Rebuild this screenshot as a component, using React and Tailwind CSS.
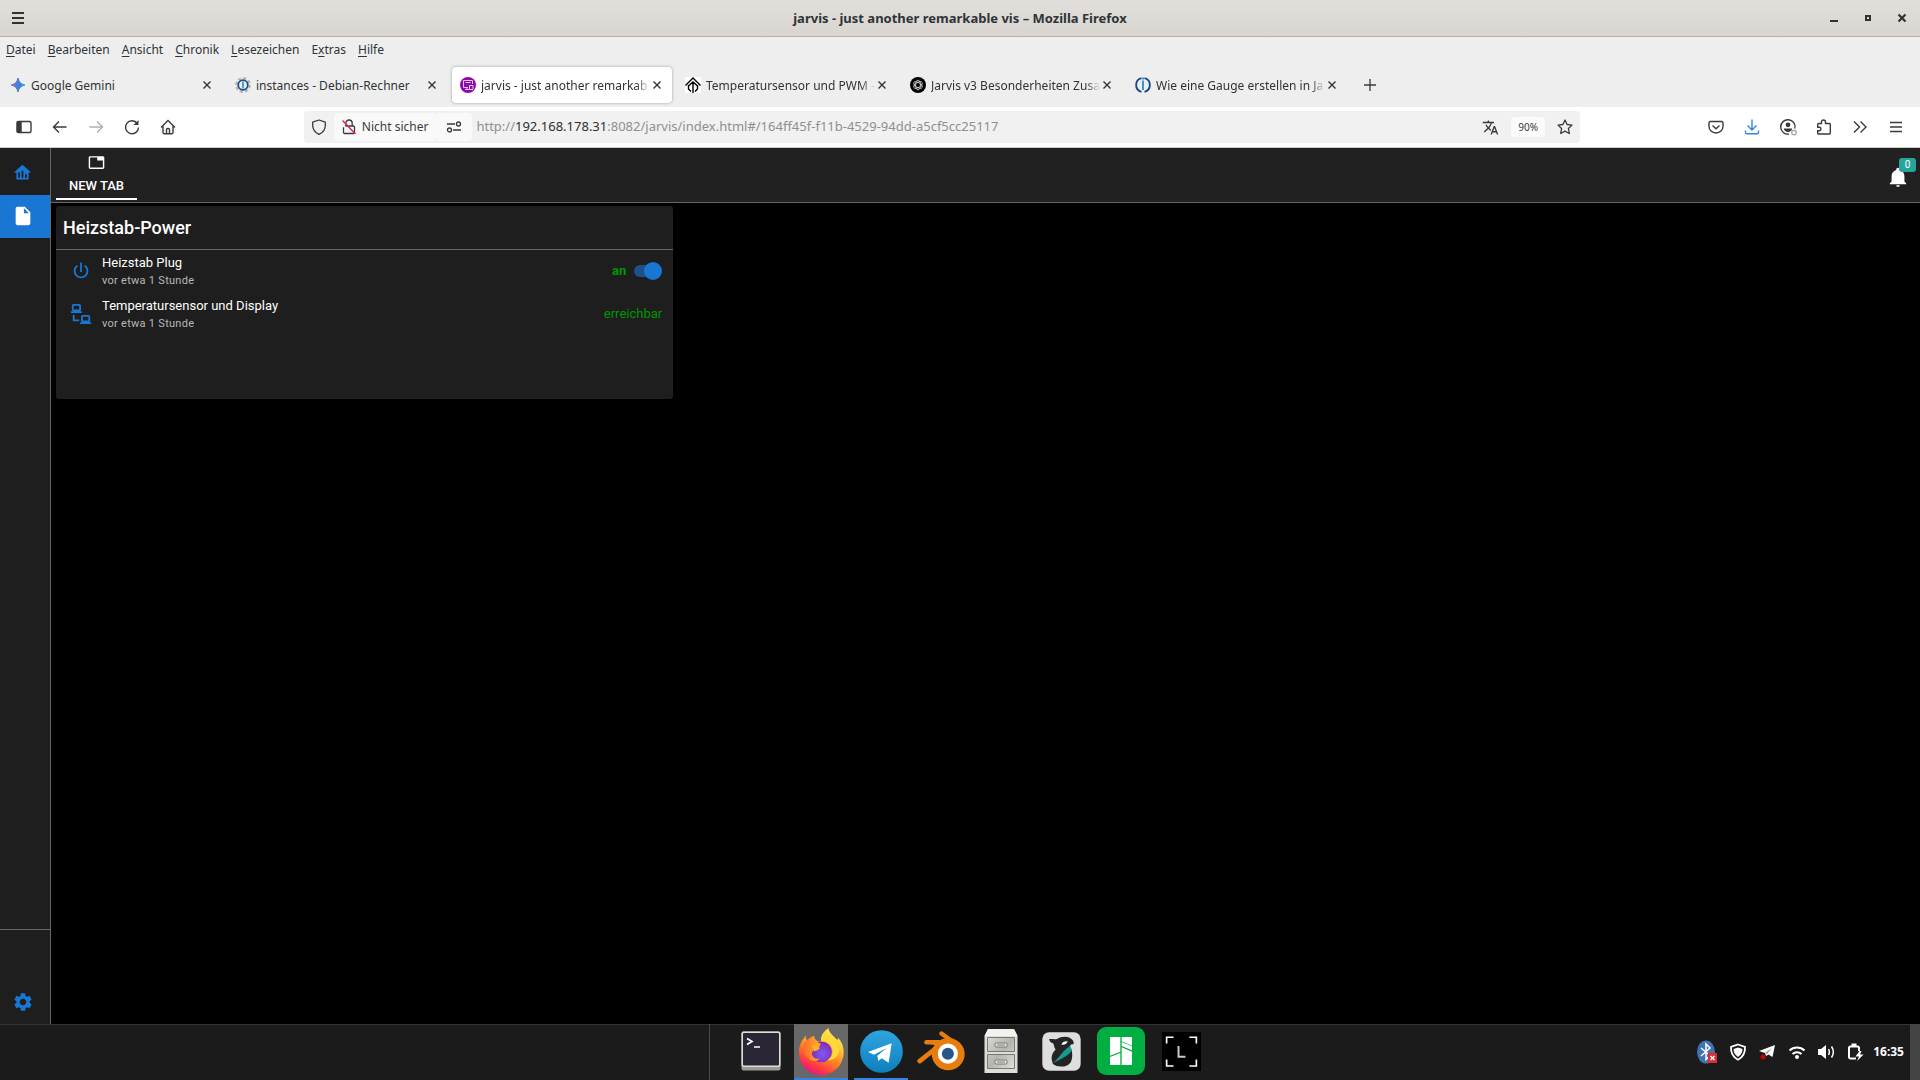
import { MdTab, MdTranslate, MdSettings } from 'react-icons/md'

const MENU = [
  ['', 'D', 'atei'],
  ['', 'B', 'earbeiten'],
  ['', 'A', 'nsicht'],
  ['', 'C', 'hronik'],
  ['', 'L', 'esezeichen'],
  ['E', 'x', 'tras'],
  ['', 'H', 'ilfe'],
]

const TABS = [
  { title: 'Google Gemini', icon: GeminiIcon },
  { title: 'instances - Debian-Rechner', icon: AdminIcon },
  { title: 'jarvis - just another remarkab', icon: JarvisIcon, active: true, fade: true },
  { title: 'Temperatursensor und PWM -', icon: ArrowIcon, fade: true },
  { title: 'Jarvis v3 Besonderheiten Zusa', icon: KnotIcon, fade: true },
  { title: 'Wie eine Gauge erstellen in Ja', icon: BrokerIcon, fade: true },
]

const PATHS = {
  home: 'M12 3L2 12H5V20H19V12H22L12 3M9 18H7V12H9V18M13 18H11V10H13V18M17 18H15V14H17V18Z',
  file: 'M13,9V3.5L18.5,9M6,2C4.89,2 4,2.89 4,4V20A2,2 0 0,0 6,22H18A2,2 0 0,0 20,20V8L14,2H6Z',
  bell: 'M21,19V20H3V19L5,17V11C5,7.9 7.03,5.17 10,4.29C10,4.19 10,4.1 10,4A2,2 0 0,1 12,2A2,2 0 0,1 14,4C14,4.1 14,4.19 14,4.29C16.97,5.17 19,7.9 19,11V17L21,19M14,21A2,2 0 0,1 12,23A2,2 0 0,1 10,21',
  power: 'M16.56,5.44L15.11,6.89C16.84,7.94 18,9.83 18,12A6,6 0 0,1 12,18A6,6 0 0,1 6,12C6,9.83 7.16,7.94 8.88,6.88L7.44,5.44C5.36,6.88 4,9.28 4,12A8,8 0 0,0 12,20A8,8 0 0,0 20,12C20,9.28 18.64,6.88 16.56,5.44M13,3H11V13H13',
  lan: 'M4,1C2.89,1 2,1.89 2,3V7C2,8.11 2.89,9 4,9H1V11H13V9H10C11.11,9 12,8.11 12,7V3C12,1.89 11.11,1 10,1H4M4,3H10V7H4V3M3,13V18L3,20H10V18H5V13H3M14,13C12.89,13 12,13.89 12,15V19C12,20.11 12.89,21 14,21H11V23H23V21H20C21.11,21 22,20.11 22,19V15C22,13.89 21.11,13 20,13H14M14,15H20V19H14V15Z',
}

const APPS = [
  { name: 'Terminal', icon: TerminalIcon },
  { name: 'Firefox', icon: FirefoxIcon, active: true, open: true },
  { name: 'Telegram', icon: TelegramIcon, open: true },
  { name: 'Blender', icon: BlenderIcon },
  { name: 'Dateien', icon: CabinetIcon },
  { name: 'OrcaSlicer', icon: OrcaIcon },
  { name: 'Bambu Studio', icon: BambuIcon },
  { name: 'LosslessCut', icon: CropIcon },
]

export default function App() {
  return (
    <div className="flex flex-col min-h-screen bg-black font-['Noto_Sans',sans-serif] text-[13px] text-[#2e3436]">
      <TitleBar />
      <MenuBar />
      <TabStrip />
      <Toolbar />
      <Jarvis />
      <Taskbar />
    </div>
  )
}

function TitleBar() {
  return (
    <header className="h-[37px] shrink-0 grid grid-cols-[1fr_auto_1fr] items-center border-b border-[#bcb0a6] bg-linear-to-b from-[#e2dedb] to-[#d9d6d1]">
      <button aria-label="Fenstermenü" className="justify-self-start ml-2">
        <svg width="20" height="20" viewBox="0 0 20 20" fill="#2e3436">
          <path d="M4 4h12v2H4zM4 9h12v2H4zM4 14h12v2H4z" />
        </svg>
      </button>
      <h1 className="pt-[2px] text-[13px] font-bold">jarvis - just another remarkable vis – Mozilla Firefox</h1>
      <div className="justify-self-end flex gap-[18px] mr-[10px]">
        <button aria-label="Minimieren">
          <svg width="16" height="16" viewBox="0 0 16 16"><path d="M4 10h8v2H4z" fill="#2e3436" /></svg>
        </button>
        <button aria-label="Maximieren">
          <svg width="16" height="16" viewBox="0 0 16 16"><path d="M6 6h4v4H6z" fill="none" stroke="#2e3436" strokeWidth="2" /></svg>
        </button>
        <button aria-label="Schließen">
          <svg width="16" height="16" viewBox="0 0 16 16"><path d="M4.5 4.5l7 7M11.5 4.5l-7 7" stroke="#2e3436" strokeWidth="2.2" /></svg>
        </button>
      </div>
    </header>
  )
}

function MenuBar() {
  return (
    <nav className="flex h-[26px] shrink-0 items-center bg-[#eeeeee] text-[12px]">
      {MENU.map(([pre, key, post]) => (
        <button key={key} className="px-[6px] leading-5">
          {pre}
          <span className="underline underline-offset-2">{key}</span>
          {post}
        </button>
      ))}
    </nav>
  )
}

function TabStrip() {
  return (
    <div className="flex h-11 shrink-0 items-center gap-[5px] bg-[#eeeeee] pl-[2px]">
      {TABS.map((tab) => (
        <Tab key={tab.title} {...tab} />
      ))}
      <button aria-label="Neuer Tab" className="flex w-9 h-9 items-center justify-center">
        <svg width="16" height="16" viewBox="0 0 16 16"><path d="M8 2v12M2 8h12" stroke="#3c3c3d" strokeWidth="1.3" /></svg>
      </button>
    </div>
  )
}

function Tab({ title, icon: Icon, active, fade }) {
  return (
    <div className={`flex w-[220px] h-9 items-center rounded pl-2 pr-2 ${active ? 'bg-white shadow-[0_0_3px_rgba(0,0,0,0.35)]' : ''}`}>
      <Icon />
      <span
        className={`flex-1 min-w-0 ml-[5px] overflow-hidden whitespace-nowrap pt-[2px] text-[12px] leading-5 ${fade ? '[mask-image:linear-gradient(to_right,black_calc(100%-14px),transparent)]' : ''}`}
      >
        {title}
      </span>
      <button aria-label="Tab schließen" className="flex w-[14px] h-6 items-center justify-center">
        <svg width="12" height="12" viewBox="0 0 12 12"><path d="M2.5 2.5l7 7M9.5 2.5l-7 7" stroke="#333" strokeWidth="1.4" /></svg>
      </button>
    </div>
  )
}

function Toolbar() {
  return (
    <div className="flex h-[41px] shrink-0 items-center border-b border-[#cccccc] bg-white px-[6px] text-[#3a3a3b]">
      <ToolButton label="Seitenleiste">
        <rect x="1" y="2.5" width="14" height="11" rx="1.5" />
        <path d="M1.5 3h3.5v10h-3.5z" fill="currentColor" />
      </ToolButton>
      <ToolButton label="Zurück">
        <path d="M14.5 8H2M7 2.5L1.5 8L7 13.5" />
      </ToolButton>
      <ToolButton label="Vor" dim>
        <path d="M1.5 8H14M9 2.5L14.5 8L9 13.5" />
      </ToolButton>
      <ToolButton label="Neu laden">
        <path d="M13.3 4.5A6.5 6.5 0 1 0 14.5 8.5" />
        <path d="M14.5 1v5h-5z" fill="currentColor" stroke="none" />
      </ToolButton>
      <ToolButton label="Startseite">
        <path d="M1 8.5L8 1.5L15 8.5M3 7v6.5a1.3 1.3 0 0 0 1.3 1.3h7.4a1.3 1.3 0 0 0 1.3-1.3V7M6.5 14.5v-4a1 1 0 0 1 1-1h1a1 1 0 0 1 1 1v4" />
      </ToolButton>
      <div className="flex-[12]" />
      <UrlBar />
      <div className="flex-[12]" />
      <ToolButton label="Pocket">
        <path d="M2.3 2.5h11.4a1.3 1.3 0 0 1 1.3 1.3V7.5a7 6.5 0 0 1-14 0V3.8a1.3 1.3 0 0 1 1.3-1.3zM4.5 6.5L8 9.7L11.5 6.5" />
      </ToolButton>
      <ToolButton label="Downloads" blue>
        <path d="M8 0.5v10M3.5 6.5L8 11L12.5 6.5M1.5 11.5v2a1.3 1.3 0 0 0 1.3 1.3h10.4a1.3 1.3 0 0 0 1.3-1.3v-2" />
      </ToolButton>
      <ToolButton label="Konto">
        <path d="M14.9 9.5A7.2 7.2 0 1 0 9 15" />
        <circle cx="8" cy="5.8" r="2.4" fill="currentColor" stroke="none" />
        <path d="M3.8 9.5h8.4c-.3 2-2 3.5-4.2 3.5s-3.9-1.5-4.2-3.5z" fill="currentColor" stroke="none" />
        <circle cx="14" cy="13.5" r="2.3" stroke="#aaaaaa" />
      </ToolButton>
      <ToolButton label="Erweiterungen">
        <path d="M1.7 8.3V5.5A1 1 0 0 1 2.7 4.5H5.5V3a2 2 0 0 1 4 0v1.5h3.8a1 1 0 0 1 1 1V14a1 1 0 0 1-1 1H2.7a1 1 0 0 1-1-1v-2.2h1.5a1.7 1.7 0 0 0 0-3.5z" />
      </ToolButton>
      <ToolButton label="Weitere Werkzeuge">
        <path d="M2 2.5L7.5 8L2 13.5M8.5 2.5L14 8L8.5 13.5" />
      </ToolButton>
      <ToolButton label="Anwendungsmenü">
        <path d="M2 3.5h12M2 8h12M2 12.5h12" />
      </ToolButton>
    </div>
  )
}

function ToolButton({ label, dim, blue, children }) {
  return (
    <button aria-label={label} className={`flex w-9 h-8 shrink-0 items-center justify-center ${dim ? 'opacity-40' : ''} ${blue ? 'text-[#3584e4]' : ''}`}>
      <svg width="16" height="16" viewBox="0 0 16 16" fill="none" stroke="currentColor" strokeWidth="1.4" className="overflow-visible">
        {children}
      </svg>
    </button>
  )
}

function UrlBar() {
  return (
    <div className="flex flex-[130] min-w-0 h-8 items-center rounded bg-[#f1f1f1]">
      <button aria-label="Tracking-Schutz" className="flex w-[30px] h-7 shrink-0 items-center justify-center">
        <svg width="16" height="16" viewBox="0 0 16 16" fill="none" stroke="currentColor" strokeWidth="1.3">
          <path d="M8 1L14.3 3.2V6.5C14.3 10.5 12 13.5 8 15.3C4 13.5 1.7 10.5 1.7 6.5V3.2z" strokeLinejoin="round" />
        </svg>
      </button>
      <button className="flex h-7 shrink-0 items-center gap-[5px] rounded bg-[#f9f9f9] pl-[7px] pr-2 text-[12px]">
        <svg width="16" height="16" viewBox="0 0 16 16" fill="none" stroke="currentColor" strokeWidth="1.3">
          <path d="M4.8 7V4.2a3.2 3.2 0 0 1 6.4 0V7M4.5 7h7.8a1.2 1.2 0 0 1 1.2 1.2v5.1a1.2 1.2 0 0 1-1.2 1.2H3.7a1.2 1.2 0 0 1-1.2-1.2V8.2" />
          <path d="M1.5 1.5L14.5 15" stroke="#e22850" strokeWidth="1.5" />
        </svg>
        Nicht sicher
      </button>
      <button aria-label="Berechtigungen" className="flex w-9 h-7 shrink-0 items-center justify-center rounded bg-[#f9f9f9]">
        <svg width="16" height="16" viewBox="0 0 16 16" fill="none" stroke="currentColor" strokeWidth="1.3">
          <path d="M1 5h8M7 11h8" />
          <circle cx="12.5" cy="5" r="2" />
          <circle cx="3.5" cy="11" r="2" />
        </svg>
      </button>
      <a href="#/164ff45f-f11b-4529-94dd-a5cf5cc25117" className="flex-1 min-w-0 ml-1 truncate text-[13px] text-[#8f8f8f]">
        http://<span className="text-[#2e2e2e]">192.168.178.31</span>:8082/jarvis/index.html#/164ff45f-f11b-4529-94dd-a5cf5cc25117
      </a>
      <button aria-label="Seite übersetzen" className="flex w-8 shrink-0 justify-center">
        <MdTranslate size={17} />
      </button>
      <button className="h-5 w-[34px] shrink-0 rounded-sm bg-[#fbfbfb] text-[10px] mx-[5px]">90%</button>
      <button aria-label="Lesezeichen hinzufügen" className="flex w-[30px] shrink-0 justify-center">
        <svg width="16" height="16" viewBox="0 0 16 16" fill="none" stroke="currentColor" strokeWidth="1.3" strokeLinejoin="round">
          <path d="M8 1l2.1 4.5 4.9.6-3.6 3.4.9 5L8 12.1 3.7 14.5l.9-5L1 6.1l4.9-.6z" />
        </svg>
      </button>
    </div>
  )
}

function MdiIcon({ path, size = 22, className }) {
  return (
    <svg width={size} height={size} viewBox="0 0 24 24" fill="currentColor" className={className}>
      <path d={path} />
    </svg>
  )
}

function Jarvis() {
  return (
    <div className="flex flex-1 font-[Roboto,sans-serif] text-white">
      <aside className="flex w-[51px] shrink-0 flex-col border-r border-[#666666] bg-[#1e1e1e] text-[#1976d2]">
        <nav className="flex-1 pt-1">
          <a href="#/" aria-label="Übersicht" className="flex h-[43px] items-center justify-center pb-[2px] pr-[5px]">
            <MdiIcon path={PATHS.home} size={21} />
          </a>
          <a href="#/page" aria-label="Seite" className="flex h-[43px] items-center justify-center bg-[#1976d2] pb-[2px] pr-[5px] text-white">
            <MdiIcon path={PATHS.file} />
          </a>
        </nav>
        <div className="flex h-[95px] items-end justify-center border-t border-[#666666] pb-[11px] pr-[5px]">
          <button aria-label="Einstellungen">
            <MdSettings size={22} />
          </button>
        </div>
      </aside>

      <div className="flex flex-1 min-w-0 flex-col">
        <div className="flex h-[55px] items-start justify-between border-b border-[#666666] bg-[#212121] pl-[5px]">
          <button className="flex w-[81px] h-[52px] flex-col items-center border-b-2 border-white pt-[6px] text-[13px] font-medium leading-4">
            <MdTab size={17} className="mb-[7px]" />
            NEW TAB
          </button>
          <button aria-label="Benachrichtigungen" className="relative mt-[18px] mr-[11px]">
            <MdiIcon path={PATHS.bell} />
            <span className="absolute -top-2 left-3 h-[14px] w-[17px] rounded-[3px] bg-[#26a69a] text-[10px] leading-[14px]">0</span>
          </button>
        </div>

        <main className="flex-1 px-[5px] pt-[3px]">
          <section className="w-[33.2%] h-[193px] rounded-[3px] bg-[#1e1e1e]">
            <h2 className="flex h-11 items-center border-b border-[#666666] px-[7px] text-[18px] font-medium">Heizstab-Power</h2>
            <Device icon={PATHS.power} name="Heizstab Plug">
              <label className="flex items-center gap-2 font-bold">
                an
                <input
                  type="checkbox"
                  role="switch"
                  defaultChecked
                  className="relative h-[18px] w-7 appearance-none before:absolute before:left-0 before:top-[3px] before:h-3 before:w-6 before:rounded-full before:bg-[#1d5187] after:absolute after:right-0 after:top-0 after:h-[18px] after:w-[18px] after:rounded-full after:bg-[#1976d2]"
                />
              </label>
            </Device>
            <Device icon={PATHS.lan} name="Temperatursensor und Display">
              erreichbar
            </Device>
          </section>
        </main>
      </div>
    </div>
  )
}

function Device({ icon, name, children }) {
  return (
    <div className="flex h-[43px] items-center pb-[2px] pl-[14px] pr-[11px]">
      <MdiIcon path={icon} className="text-[#1976d2]" />
      <div className="ml-[10px] flex-1 pt-[2px]">
        <p className="text-[13px] leading-[18px]">{name}</p>
        <p className="text-[11px] leading-[17px] tracking-wide text-[#b8b8b8]">vor etwa 1 Stunde</p>
      </div>
      <div className="text-[13px] text-[#009600]">{children}</div>
    </div>
  )
}

function Taskbar() {
  return (
    <footer className="flex h-14 shrink-0 items-stretch bg-[#1b1b1b] shadow-[inset_0_1px_#333333]">
      <div className="w-[37%] border-r border-[#4a4a4a]" />
      <div className="flex gap-[6px] pl-6">
        {APPS.map(({ name, icon: Icon, active, open }) => (
          <button
            key={name}
            aria-label={name}
            className={`flex w-[54px] items-center justify-center ${active ? 'bg-[#686868]' : ''} ${open ? 'border-b-2 border-[#3584e4]' : 'border-b-2 border-transparent'}`}
          >
            <Icon />
          </button>
        ))}
      </div>
      <Tray />
    </footer>
  )
}

function Tray() {
  return (
    <div className="ml-auto flex items-center text-white">
      <div className="flex items-center gap-3">
        <svg width="20" height="24" viewBox="0 0 20 24">
          <ellipse cx="9" cy="12" rx="9" ry="11.5" fill="#3f73b3" />
          <path d="M4 8l9 7.5-4 4V4l4 4-9 8" fill="none" stroke="#fff" strokeWidth="1.5" />
          <path d="M11 13h9v10h-9z" fill="#e02b34" />
          <path d="M13.5 16l4 4M17.5 16l-4 4" stroke="#fff" strokeWidth="1.5" />
        </svg>
        <svg width="18" height="18" viewBox="0 0 18 18">
          <path d="M9 1.5l7 2.5c.3 5.5-2 10-7 12.8C4 14 1.7 9.5 2 4z" fill="none" stroke="#fff" strokeWidth="1.8" />
          <path d="M9 4.5l4.5 1.6c0 3.400-1.500 6-4.500 7.900-3-1.900-4.500-4.500-4.500-7.900z" fill="#fff" />
        </svg>
        <svg width="17" height="18" viewBox="0 0 17 18">
          <path d="M0 8L16 2L13.5 14L9.5 11.5L7 13L6 10z" fill="#fff" />
          <path d="M6 10L13 5L8 11" fill="#999" />
          <circle cx="4" cy="14" r="2.5" fill="#cc0000" />
        </svg>
        <svg width="18" height="18" viewBox="0 0 18 18" fill="none" stroke="#fff" strokeWidth="2">
          <path d="M1.5 7.5a11 11 0 0 1 15 0M4.5 11a6.5 6.5 0 0 1 9 0" />
          <circle cx="9" cy="14" r="2" fill="#fff" stroke="none" />
        </svg>
        <svg width="17" height="18" viewBox="0 0 17 18">
          <path d="M0 6h3l5-4v14l-5-4H0z" fill="#fff" />
          <path d="M10.5 6c1 1.8 1 4.2 0 6M13.5 3.5c2.2 3.3 2.2 7.7 0 11" fill="none" stroke="#fff" strokeWidth="1.5" />
        </svg>
        <svg width="17" height="18" viewBox="0 0 17 18">
          <path d="M9 15.5H3.5A1.5 1.5 0 0 1 2 14V5a1.5 1.5 0 0 1 1.500-1.500h7A1.5 1.5 0 0 1 12 5v3" fill="none" stroke="#fff" strokeWidth="2" />
          <path d="M4.500 0.500h5v3h-5z" fill="#fff" />
          <path d="M12.500 8l-4 5.500h3.500l-2 4.500 6.500-6.500h-3.500l1.500-3.500z" fill="#fff" />
        </svg>
      </div>
      <time className="ml-[9px] text-[12px] font-bold">16:35</time>
      <div className="ml-[6px] w-[10px] self-stretch bg-[#444444]" />
    </div>
  )
}

/* Tab favicons */

function GeminiIcon() {
  return (
    <svg width="16" height="16" viewBox="0 0 16 16" className="shrink-0">
      <defs>
        <linearGradient id="gem" x1="0" y1="0" x2="1" y2="0">
          <stop offset="0" stopColor="#8e75c2" />
          <stop offset="0.6" stopColor="#3a80d8" />
          <stop offset="1" stopColor="#26b0d8" />
        </linearGradient>
      </defs>
      <path d="M8 1C9 5.2 10.8 7 15 8C10.8 9 9 10.8 8 15C7 10.8 5.2 9 1 8C5.2 7 7 5.2 8 1z" fill="url(#gem)" stroke="url(#gem)" />
    </svg>
  )
}

function AdminIcon() {
  return (
    <svg width="16" height="16" viewBox="0 0 16 16" fill="none" className="shrink-0">
      <circle cx="8" cy="8" r="6.8" stroke="#b5b5b5" strokeWidth="2.2" strokeDasharray="3.2 2.14" />
      <circle cx="8" cy="8" r="4.8" fill="#e8f0f5" stroke="#214a84" strokeWidth="1.8" />
      <path d="M8 4.5v7" stroke="#3a9ad9" strokeWidth="1.8" />
    </svg>
  )
}

function JarvisIcon() {
  return (
    <svg width="16" height="16" viewBox="0 0 16 16" fill="none" stroke="#e9c8ef" className="shrink-0">
      <circle cx="8" cy="8" r="8" fill="#8e0aab" stroke="none" />
      <path d="M8 10.5H3.5v-7h9V7M5.5 5.5h5M5 12.5h4M7 10.5v2M9.5 8.5h3.5v4h-3.5z" />
    </svg>
  )
}

function ArrowIcon() {
  return (
    <svg width="16" height="16" viewBox="0 0 16 16" fill="none" stroke="#000" strokeWidth="1.4" className="shrink-0">
      <path d="M0 0h16v16H0z" fill="#fff" stroke="none" />
      <path d="M0.5 8.5L8 1L15.5 8.5M8 5v11M3.5 8v4L6 14.5M12.5 8v4L10 14.5M4 8.5L8 5L12 8.5" />
    </svg>
  )
}

function KnotIcon() {
  return (
    <svg width="16" height="16" viewBox="0 0 16 16" fill="none" className="shrink-0">
      <circle cx="8" cy="8" r="8" fill="#000" />
      <g stroke="#ddd" strokeWidth="0.8">
        <ellipse cx="8" cy="8" rx="2.4" ry="4.8" />
        <ellipse cx="8" cy="8" rx="2.4" ry="4.8" transform="rotate(60 8 8)" />
        <ellipse cx="8" cy="8" rx="2.4" ry="4.8" transform="rotate(120 8 8)" />
      </g>
    </svg>
  )
}

function BrokerIcon() {
  return (
    <svg width="16" height="16" viewBox="0 0 16 16" fill="none" className="shrink-0">
      <path d="M6.5 1.2A7 7 0 0 0 6.5 14.8M9.5 1.2A7 7 0 0 1 9.5 14.8" stroke="#1a4a86" strokeWidth="1.9" />
      <path d="M8 0.5v2M8 3.5v9.5" stroke="#3399cc" strokeWidth="2" />
    </svg>
  )
}

/* Taskbar launchers */

function TerminalIcon() {
  return (
    <svg width="40" height="40" viewBox="0 0 40 40">
      <rect x="0.5" y="0.5" width="39" height="39" rx="2" fill="#9b9b95" />
      <rect x="0.5" y="0.5" width="39" height="35.5" rx="2" fill="#deddd8" />
      <rect x="2" y="2" width="36" height="32.5" rx="1" fill="#2a2636" />
      <path d="M6 7.5l5 3-5 3M13 16h6" fill="none" stroke="#fff" strokeWidth="1.7" />
    </svg>
  )
}

function FirefoxIcon() {
  return (
    <svg width="45" height="47" viewBox="300 50 134 140">
      <defs>
        <linearGradient id="fx" x1="0.8" y1="0.05" x2="0.3" y2="1">
          <stop offset="0" stopColor="#fff44f" />
          <stop offset="0.3" stopColor="#ffc233" />
          <stop offset="0.6" stopColor="#ff7a22" />
          <stop offset="0.82" stopColor="#ff3647" />
          <stop offset="1" stopColor="#e31587" />
        </linearGradient>
        <radialGradient id="globe" cx="0.55" cy="0.6" r="0.6">
          <stop offset="0" stopColor="#7a5cff" />
          <stop offset="1" stopColor="#8a24a8" />
        </radialGradient>
        <linearGradient id="head" x1="0" y1="0" x2="1" y2="0">
          <stop offset="0" stopColor="#ff6b2c" />
          <stop offset="1" stopColor="#ffb128" />
        </linearGradient>
      </defs>
      <path
        d="M322 72C319 79 321 85 325 88C331 82 338 76 345 73C344 82 351 89 360 91L368 88C363 72 376 58 388 50C388 66 405 74 414 86L417 80C428 92 434 107 433 125C431 161 403 190 366 190C328 190 300 160 300 122C300 102 308 84 322 72z"
        fill="url(#fx)"
      />
      <circle cx="367" cy="121" r="31" fill="url(#globe)" />
      <path d="M314 98C322 84 334 78 345 73C344 84 352 92 364 96C364 104 360 107 350 111C346 114 338 120 338 128C342 140 352 144 362 141C354 152 334 150 324 137C315 126 311 112 314 98z" fill="url(#head)" />
      <path d="M366 89C385 86 398 98 400 112C404 124 396 140 384 146C405 148 420 132 420 112C419 98 410 88 400 80C390 72 382 66 380 58C370 66 364 78 366 89z" fill="#ffd93b" />
      <path d="M338 100C347 102 356 105 362 109C361 114 353 118 345 119z" fill="#ffb02e" />
    </svg>
  )
}

function TelegramIcon() {
  return (
    <svg width="43" height="43" viewBox="482 58 129 129">
      <defs>
        <linearGradient id="tg" x1="0" y1="0" x2="0" y2="1">
          <stop offset="0" stopColor="#2fa5e0" />
          <stop offset="1" stopColor="#0d80bd" />
        </linearGradient>
      </defs>
      <circle cx="546.5" cy="122.5" r="64" fill="url(#tg)" />
      <path d="M506 124L577 98L568 156L547 143L537 151L534 135L562 112L524 132z" fill="#fff" />
    </svg>
  )
}

function BlenderIcon() {
  return (
    <svg width="48" height="40" viewBox="655 70 143 118" fill="none" stroke="#e87d0d" strokeLinecap="round">
      <path d="M728 77L768 106" strokeWidth="13" />
      <path d="M683 103H740" strokeWidth="13" />
      <path d="M663 159L712 120" strokeWidth="14" />
      <path d="M696 108L745 92L790 115L770 130z" fill="#e87d0d" stroke="none" />
      <ellipse cx="748" cy="138" rx="49" ry="48" fill="#e87d0d" stroke="none" />
      <circle cx="747" cy="137" r="30" fill="#fff" stroke="none" />
      <circle cx="747" cy="137" r="18" fill="#265787" stroke="none" />
    </svg>
  )
}

function CabinetIcon() {
  return (
    <svg width="34" height="44" viewBox="0 0 34 44">
      <defs>
        <linearGradient id="cab" x1="0" y1="0" x2="1" y2="1">
          <stop offset="0" stopColor="#d8d8d4" />
          <stop offset="0.5" stopColor="#b4b5ae" />
          <stop offset="1" stopColor="#e2e2de" />
        </linearGradient>
      </defs>
      <path d="M4 0h26l3.5 7v37H0.5V7z" fill="#deded9" />
      <path d="M4 0h26l3.5 7H0.5z" fill="#f2f2ef" />
      <g fill="url(#cab)" stroke="#777972">
        <path d="M3.5 8.5h27v14h-27zM3.5 25.5h27v14h-27z" />
        <rect x="11" y="14" width="12" height="4" rx="1" fill="#e8e8e4" />
        <rect x="11" y="31" width="12" height="4" rx="1" fill="#e8e8e4" />
      </g>
      <path d="M13 16h8M13 33h8" stroke="#777972" />
    </svg>
  )
}

function OrcaIcon() {
  return (
    <svg width="39" height="39" viewBox="217 63 117 117">
      <rect x="218" y="64" width="115" height="115" rx="20" fill="#dededf" />
      <path
        d="M238 85C246 83 254 86 262 84C274 76 290 76 300 80C309 85 315 93 311 100C303 98 300 104 302 110C310 122 309 140 304 152C296 166 280 168 268 166C256 164 248 160 248 152C242 136 250 122 258 116C252 108 254 102 250 97C244 96 240 92 238 85z"
        fill="#242424"
      />
      <path d="M246 158C268 144 270 128 300 105L307 116C300 134 268 146 246 158z" fill="#159a8c" />
      <path d="M275 101C278 93 284 90 294 91C292 98 285 103 275 101z" fill="#fff" />
    </svg>
  )
}

function BambuIcon() {
  return (
    <svg width="48" height="48" viewBox="384 51 144 144">
      <rect x="384" y="51" width="144" height="144" rx="27" fill="#00ae42" />
      <path d="M423 81h31v44l-31 12zM423 141l31-12v36h-31zM458 81h31v26l-31-13zM458 112l31 13v40h-31zM458 96l31 13v12l-31-13z" fill="#fff" />
    </svg>
  )
}

function CropIcon() {
  return (
    <svg width="39" height="39" viewBox="577 63 118 118" fill="none">
      <path d="M577 63h118v118H577z" fill="#000" />
      <path d="M591 98V79h21M660 79h21v19M591 146v20h21M660 166h21v-20" stroke="#fff" strokeWidth="5" />
      <path d="M627 105v33h21" stroke="#c9c9c9" strokeWidth="6" />
    </svg>
  )
}
